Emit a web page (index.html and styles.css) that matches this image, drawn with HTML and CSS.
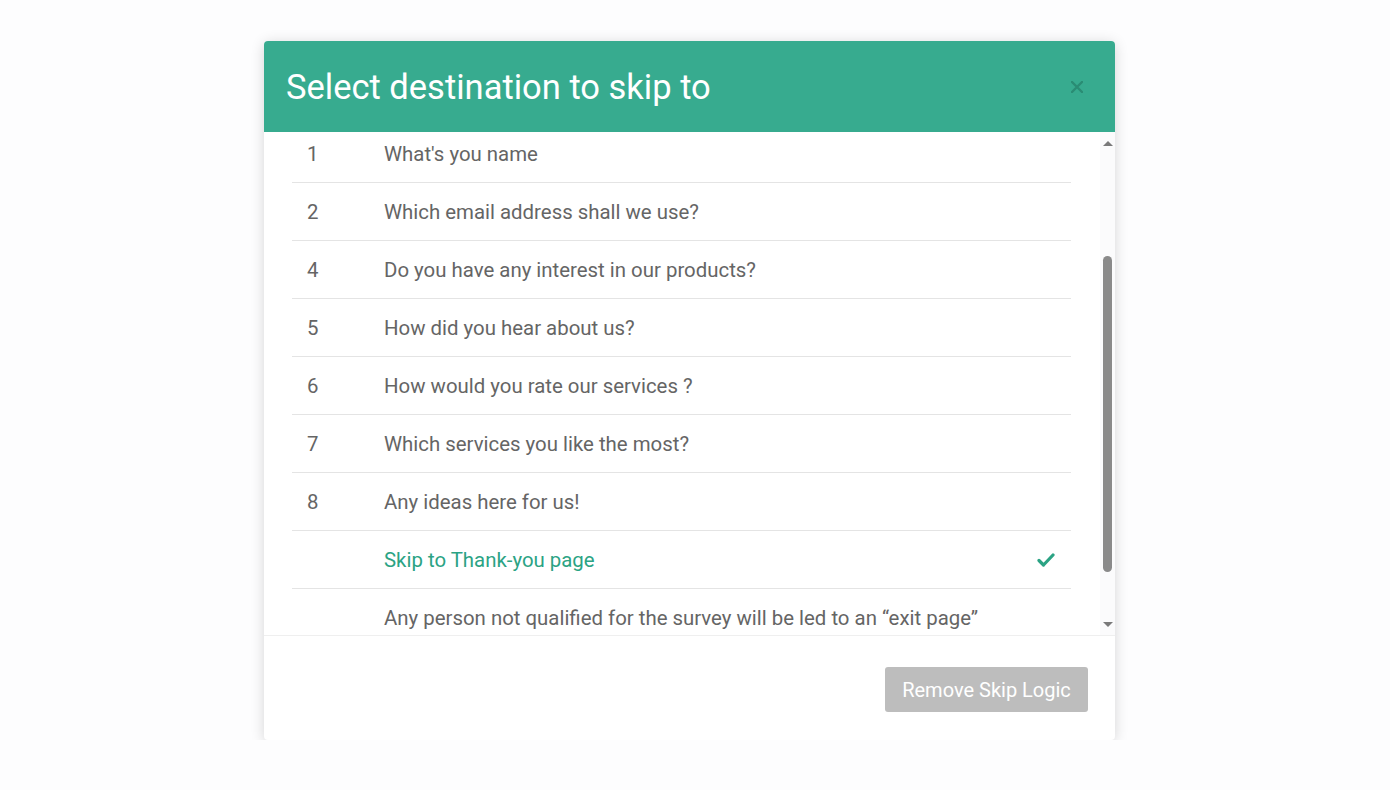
FILE: index.html
```html
<!DOCTYPE html>
<html lang="en">
<head>
  <meta charset="UTF-8">
  <meta name="viewport" content="width=device-width, initial-scale=1.0">
  <title>Select destination</title>
  <link rel="stylesheet" href="styles.css">
</head>
<body>
  <div class="page">
    <div class="modal">
      <div class="modal-header">
        <h1 class="modal-title">Select destination to skip to</h1>
        <svg class="close" width="12" height="12" viewBox="0 0 12 12">
          <path d="M1,1 L11,11 M11,1 L1,11" stroke="#2a8c74" stroke-width="2.4" stroke-linecap="round"/>
        </svg>
      </div>

      <div class="modal-body">
        <div class="list-wrap">
          <ul class="list">
            <li class="row"><span class="num">1</span><span class="label">What's you name</span></li>
            <li class="row"><span class="num">2</span><span class="label">Which email address shall we use?</span></li>
            <li class="row"><span class="num">4</span><span class="label">Do you have any interest in our products?</span></li>
            <li class="row"><span class="num">5</span><span class="label">How did you hear about us?</span></li>
            <li class="row"><span class="num">6</span><span class="label">How would you rate our services ?</span></li>
            <li class="row"><span class="num">7</span><span class="label">Which services you like the most?</span></li>
            <li class="row"><span class="num">8</span><span class="label">Any ideas here for us!</span></li>
            <li class="row selected">
              <span class="num"></span><span class="label">Skip to Thank-you page</span>
              <svg class="check" width="18" height="14" viewBox="0 0 18 14">
                <path d="M2,7.5 L6.5,12 L16,2" fill="none" stroke="#2ba384" stroke-width="3.2" stroke-linecap="round" stroke-linejoin="round"/>
              </svg>
            </li>
            <li class="row"><span class="num"></span><span class="label">Any person not qualified for the survey will be led to an “exit page”</span></li>
          </ul>
        </div>

        <div class="scrollbar">
          <div class="arrow"><span class="tri-up"></span></div>
          <div class="track"><div class="thumb"></div></div>
          <div class="arrow"><span class="tri-down"></span></div>
        </div>
      </div>

      <div class="modal-footer">
        <button class="btn-remove">Remove Skip Logic</button>
      </div>
    </div>
  </div>
</body>
</html>
```

FILE: styles.css
```css
body {
  margin: 0;
  background-color: #fdfdfe;
  font-family: Roboto, "Liberation Sans", sans-serif;
}

.page {
  padding: 41px 0 0 264px;
}

.modal {
  width: 851px;
  background: #fff;
  border-radius: 4px;
  box-shadow: 0 2px 14px rgba(0, 0, 0, 0.16);
  overflow: hidden;
}

.modal-header {
  height: 91px;
  background-color: #37ab8f;
  display: flex;
  align-items: center;
  justify-content: space-between;
  padding: 0 32px 0 22px;
}

.modal-title {
  margin: 0;
  color: #fff;
  font-size: 34.5px;
  font-weight: 400;
}

.modal-body {
  height: 503px;
  display: flex;
  border-bottom: 1px solid #efefef;
}

.list-wrap {
  flex: 1;
  overflow: hidden;
}

.list {
  list-style: none;
  margin: -7px 0 0;
  padding: 0 29px 0 28px;
}

.row {
  height: 57px;
  display: flex;
  align-items: center;
  border-bottom: 1px solid #e4e4e4;
  color: #656565;
  font-size: 20.4px;
}

.num {
  width: 77px;
  padding-left: 15px;
}

.label {
  flex: 1;
}

.selected .label {
  color: #2ba384;
}

.check {
  margin-right: 16px;
}

.scrollbar {
  width: 15px;
  display: flex;
  flex-direction: column;
  background: #fbfbfc;
}

.arrow {
  height: 22px;
  display: flex;
  align-items: center;
  justify-content: center;
}

.tri-up {
  width: 0;
  height: 0;
  border-left: 5px solid transparent;
  border-right: 5px solid transparent;
  border-bottom: 5px solid #7a7a7a;
}

.tri-down {
  width: 0;
  height: 0;
  border-left: 5px solid transparent;
  border-right: 5px solid transparent;
  border-top: 5px solid #7a7a7a;
}

.track {
  flex: 1;
  display: flex;
  justify-content: center;
}

.thumb {
  width: 9px;
  height: 316px;
  margin-top: 102px;
  border-radius: 5px;
  background: #8a8a8a;
}

.modal-footer {
  display: flex;
  justify-content: flex-end;
  padding: 31px 27px 28px;
}

.btn-remove {
  width: 203px;
  height: 45px;
  border: none;
  border-radius: 3px;
  background: #bdbdbd;
  color: #fff;
  font-family: Roboto, "Liberation Sans", sans-serif;
  font-size: 20px;
}
```
